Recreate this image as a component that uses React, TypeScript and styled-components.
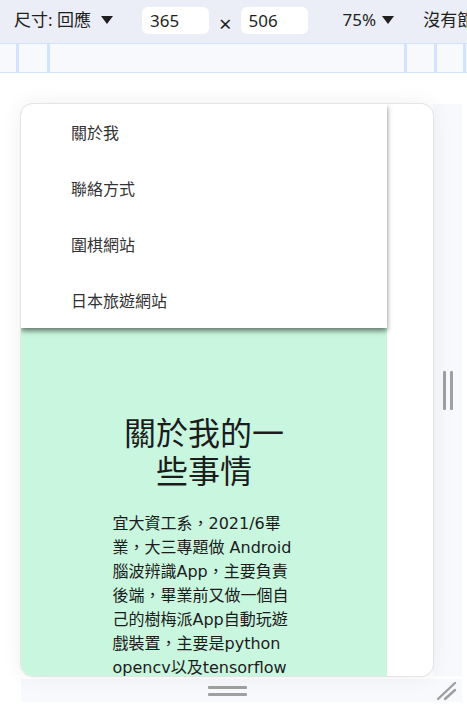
import React from "react";
import styled, { createGlobalStyle } from "styled-components";

const Global = createGlobalStyle`
  html, body { margin: 0; padding: 0; background: #fff; }
  body {
    width: 467px; height: 712px; overflow: hidden;
    font-family: "Noto Sans", "Noto Sans CJK TC", sans-serif;
  }
`;

const Toolbar = styled.div`
  box-sizing: border-box;
  height: 44px;
  background: #ebeef6;
  border-bottom: 1px solid #d3e3fd;
  display: flex;
  align-items: center;
  padding: 0 0 3px 14px;
  font-size: 17px;
  color: #1f1f1f;
  white-space: nowrap;
  overflow: hidden;
`;

const Label = styled.span<{ $ml?: number }>`
  margin-left: ${(p) => p.$ml ?? 0}px;
  line-height: 20px;
  flex: none;
`;

const Caret = styled.svg<{ $ml?: number }>`
  margin-left: ${(p) => p.$ml ?? 0}px;
  flex: none;
`;

const SizeInput = styled.div<{ $ml?: number }>`
  margin-left: ${(p) => p.$ml ?? 0}px;
  box-sizing: border-box;
  width: 67px;
  height: 27px;
  border-radius: 6px;
  background: #fff;
  padding-left: 8px;
  line-height: 27px;
  font-size: 17px;
  flex: none;
`;

const Times = styled.span<{ $ml?: number }>`
  margin-left: ${(p) => p.$ml ?? 0}px;
  font-size: 22px;
  line-height: 20px;
  margin-top: 6px;
  flex: none;
`;

const Ruler = styled.div`
  position: relative;
  height: 29px;
  box-sizing: border-box;
  background: #f8f9fd;
  border-bottom: 1px solid #d3e3fd;
`;

const Mark = styled.div<{ $left: number }>`
  position: absolute;
  top: 0;
  bottom: 0;
  left: ${(p) => p.$left}px;
  width: 3px;
  background: #d3e3fd;
`;

const Stage = styled.div`
  padding: 31px 0 0 21px;
`;

const Frame = styled.div`
  display: grid;
  grid-template-columns: 412px 29px;
  grid-template-rows: 572px 26px;
`;

const Device = styled.div`
  position: relative;
  overflow: hidden;
  border-radius: 12px;
  background: #fff;
  box-shadow: 0 0 0 1px #e4e4e4, 0 0 22px rgba(0, 0, 0, 0.07);
`;

const Page = styled.div`
  width: 366px;
  height: 100%;
  background: #c9f6df;
`;

const Article = styled.div`
  width: 50%;
  margin: 0 auto;
  padding-top: 308px;
  color: #1c1c1c;
`;

const Heading = styled.h1`
  margin: 0 0 23px;
  font-family: "Noto Sans CJK TC", sans-serif;
  font-weight: 400;
  font-size: 32px;
  line-height: 1.2;
  text-align: center;
`;

const Para = styled.p`
  margin: 0;
  font-family: "DejaVu Sans", "Noto Sans CJK TC", sans-serif;
  font-size: 16px;
  line-height: 24px;
`;

const Menu = styled.nav`
  position: absolute;
  top: 0;
  left: 0;
  width: 366px;
  background: #fff;
  box-shadow: 0 3px 5px rgba(0, 0, 0, 0.5);
`;

const MenuItem = styled.div`
  height: 56px;
  display: flex;
  align-items: center;
  padding-left: 50px;
  font-family: "Noto Sans CJK TC", sans-serif;
  font-size: 16px;
  color: #333;
`;

const SideRail = styled.div`
  background: #f8f9fd;
  display: flex;
  align-items: center;
  justify-content: center;
  gap: 4px;
`;

const VBar = styled.div`
  width: 3px;
  height: 39px;
  border-radius: 1px;
  background: #a0a0a0;
`;

const BottomRail = styled.div`
  background: #f8f9fd;
  display: flex;
  flex-direction: column;
  align-items: center;
  justify-content: center;
  gap: 4px;
  margin-top: 3px;
`;

const HBar = styled.div`
  width: 39px;
  height: 3px;
  border-radius: 1px;
  background: #a0a0a0;
`;

const Corner = styled.div`
  background: #f8f9fd;
  margin-top: 3px;
  display: flex;
  align-items: flex-start;
  padding: 3px 0 0 4px;
`;

const TriangleDown: React.FC<{ ml: number }> = ({ ml }) => (
  <Caret $ml={ml} width="12" height="8" viewBox="0 0 12 8">
    <polygon points="0,0 12,0 6,8" fill="#1f1f1f" />
  </Caret>
);

const menu = ["關於我", "聯絡方式", "圍棋網站", "日本旅遊網站"];
const marks = [16, 47, 404, 434, 463];

export default function App() {
  return (
    <>
      <Global />
      <Toolbar>
        <Label>尺寸: 回應</Label>
        <TriangleDown ml={10} />
        <SizeInput $ml={29}>365</SizeInput>
        <Times $ml={10}>×</Times>
        <SizeInput $ml={9}>506</SizeInput>
        <Label $ml={35}>75%</Label>
        <TriangleDown ml={6} />
        <Label $ml={29}>沒有節流</Label>
      </Toolbar>
      <Ruler>
        {marks.map((m) => (
          <Mark key={m} $left={m} />
        ))}
      </Ruler>
      <Stage>
        <Frame>
          <Device>
            <Page>
              <Article>
                <Heading>關於我的一些事情</Heading>
                <Para>
                  宜大資工系，2021/6畢業，大三專題做 Android
                  腦波辨識App，主要負責後端，畢業前又做一個自己的樹梅派App自動玩遊戲裝置，主要是python
                  opencv以及tensorflow的應用。
                </Para>
              </Article>
            </Page>
            <Menu>
              {menu.map((m) => (
                <MenuItem key={m}>{m}</MenuItem>
              ))}
            </Menu>
          </Device>
          <SideRail>
            <VBar />
            <VBar />
          </SideRail>
          <BottomRail>
            <HBar />
            <HBar />
          </BottomRail>
          <Corner>
            <svg width="20" height="20" viewBox="0 0 20 20">
              <line x1="1" y1="17" x2="18" y2="1" stroke="#9e9e9e" strokeWidth="2.4" strokeLinecap="round" />
              <line x1="8" y1="17" x2="18" y2="8" stroke="#9e9e9e" strokeWidth="2.4" strokeLinecap="round" />
            </svg>
          </Corner>
        </Frame>
      </Stage>
    </>
  );
}
